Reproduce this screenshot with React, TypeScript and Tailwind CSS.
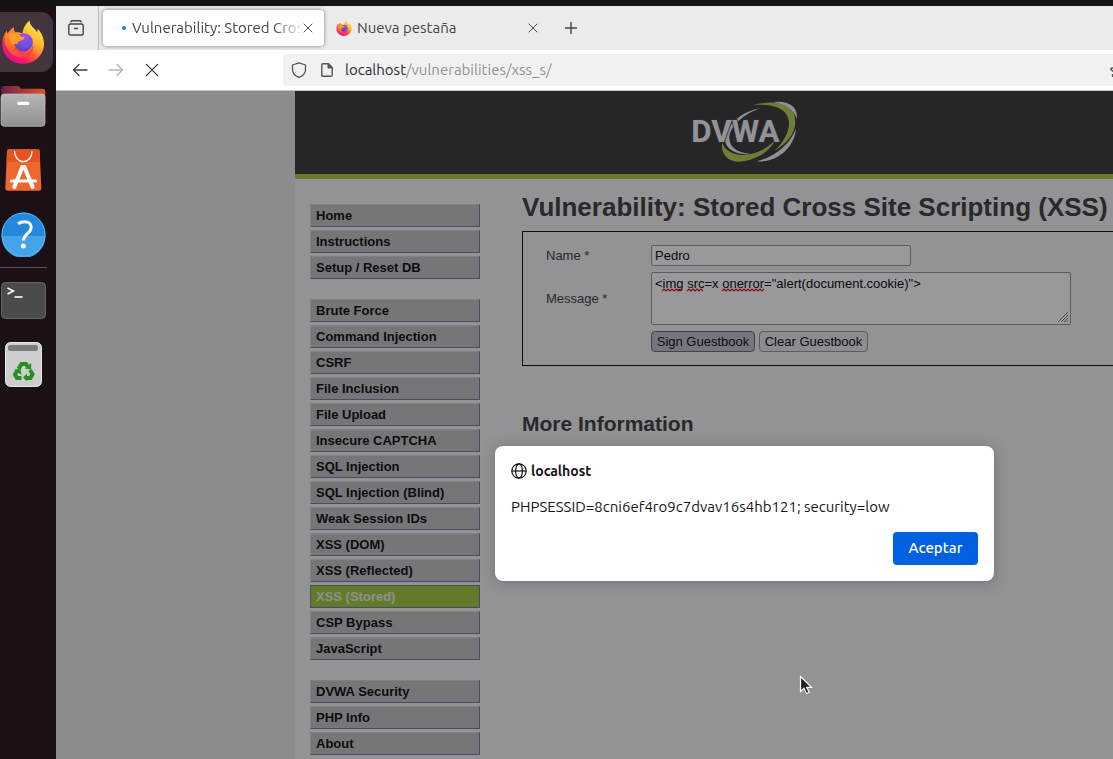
import React from "react";

const UI_FONT = "font-['Ubuntu','Noto_Sans',sans-serif]";

function FirefoxLogo({ id, className }: { id: string; className: string }) {
  return (
    <svg className={className} viewBox="0 0 132 134" aria-hidden="true">
      <defs>
        <linearGradient id={`${id}-body`} x1="0.85" y1="0.1" x2="0.25" y2="0.95">
          <stop offset="0" stopColor="#ffe94a" />
          <stop offset="0.35" stopColor="#ffb52c" />
          <stop offset="0.62" stopColor="#ff5a36" />
          <stop offset="0.85" stopColor="#f5156c" />
          <stop offset="1" stopColor="#e0128f" />
        </linearGradient>
        <linearGradient id={`${id}-left`} x1="0" y1="0" x2="0.4" y2="1">
          <stop offset="0" stopColor="#ff9a1f" />
          <stop offset="0.6" stopColor="#ff6a2e" />
          <stop offset="1" stopColor="#ff3d4a" />
        </linearGradient>
        <radialGradient id={`${id}-globe`} cx="0.6" cy="0.2" r="0.9">
          <stop offset="0" stopColor="#a24bf0" />
          <stop offset="0.6" stopColor="#6a4fe0" />
          <stop offset="1" stopColor="#4a3cb0" />
        </radialGradient>
      </defs>
      <path
        d="M86 2c0 9 5 15 12 22 6 6 9 9 11 14 1-4 2-8 1-12 13 13 20 31 20 46 0 34-28 61-64 61S3 106 3 72c0-14 4-28 14-40 0 4 0 7 2 10C24 34 30 28 38 23c-1 6 1 11 4 15 8-1 15 0 22 3C66 26 74 10 86 2Z"
        fill={`url(#${id}-body)`}
      />
      <path
        d="M17 32c0 4 0 7 2 10C24 34 30 28 38 23c-1 6 1 11 4 15 9 0 14 5 18 12l-20 40 28 14c17-1 29-15 27-33 8 19-6 44-33 45C34 113 14 90 11 66c-1-12 1-24 6-34Z"
        fill={`url(#${id}-left)`}
      />
      <circle cx="68" cy="68" r="28" fill={`url(#${id}-globe)`} />
      <path
        d="M24 44c10-7 28-6 36 6l10 2c2 5-3 9-11 11-7 2-11 6-10 12-6-4-11-2-15 0-8-8-12-20-10-31Z"
        fill="#ff9a2c"
      />
    </svg>
  );
}

function FilesIcon() {
  return (
    <svg className="h-[42px] w-[46px]" viewBox="0 0 138 126" aria-hidden="true">
      <defs>
        <linearGradient id="files-back" x1="0" x2="1">
          <stop offset="0" stopColor="#6d2247" />
          <stop offset="1" stopColor="#e0552a" />
        </linearGradient>
        <linearGradient id="files-front" x1="0" y1="0" x2="0" y2="1">
          <stop offset="0" stopColor="#b5b5b5" />
          <stop offset="1" stopColor="#909090" />
        </linearGradient>
      </defs>
      <path d="M4 40V14Q4 3 14 3H54q5 0 8 8H126q10 0 10 10V60H4Z" fill="url(#files-back)" />
      <rect x="3" y="27" width="132" height="97" rx="10" fill="url(#files-front)" stroke="#c2c2c2" strokeWidth="2" />
      <rect x="52" y="50" width="36" height="10" rx="4" fill="#fff" />
    </svg>
  );
}

function SoftwareIcon() {
  return (
    <svg className="h-[42px] w-[37px]" viewBox="0 0 111 126" aria-hidden="true">
      <path d="M12 1H99q5 0 5 6l5 110q0 8-8 8H9q-8 0-8-8L6 7Q6 1 12 1Z" fill="#ee672f" />
      <path d="M12 1H99q5 0 5 6l1 32H5L6 7Q6 1 12 1Z" fill="#e35420" />
      <path d="M29 8a26 30 0 0 0 52 0" fill="none" stroke="#fff" strokeWidth="4" strokeLinecap="round" />
      <path d="M52 54 28 114M58 54l25 60" fill="none" stroke="#fff" strokeWidth="12" strokeLinecap="round" />
      <path d="M19 96H92" stroke="#fff" strokeWidth="9" strokeLinecap="round" />
    </svg>
  );
}

function HelpIcon() {
  return (
    <svg className="size-[45px]" viewBox="0 0 45 45" aria-hidden="true">
      <circle cx="22.500" cy="22.500" r="22" fill="#2488dd" />
      <path d="M.5 24a22 22 0 0 0 44 0Z" fill="#45a4e8" />
      <circle cx="22.500" cy="22.500" r="21.500" fill="none" stroke="#5fb2ee" />
      <path d="M17 11.800c2-1.500 4.300-2.100 6.500-2.100 4.200 0 6.700 2.200 6.700 5.600 0 6.200-7.700 6.700-7.700 13.200" fill="none" stroke="#fff" strokeWidth="3" />
      <circle cx="22.300" cy="34" r="2.500" fill="#fff" />
    </svg>
  );
}

function TerminalIcon() {
  return (
    <svg className="h-[37px] w-[45px]" viewBox="0 0 45 37" aria-hidden="true">
      <rect x=".5" y=".5" width="44" height="36" rx="4" fill="#4b4b4b" stroke="#666" />
      <path d="m6.500 6 6 3-6 3" fill="none" stroke="#fff" strokeWidth="1.600" />
      <path d="M13.500 15h8" stroke="#fff" strokeWidth="1.600" />
    </svg>
  );
}

function TrashIcon() {
  return (
    <svg className="h-[45px] w-[37px]" viewBox="0 0 37 45" aria-hidden="true">
      <rect x=".5" y=".5" width="36" height="44" rx="5" fill="#cecece" stroke="#e8e8e8" />
      <rect x="3" y="3" width="30" height="6" rx="2.500" fill="#7b7b7b" />
      <g fill="none" stroke="#26901d" strokeWidth="4">
        <path d="m13.500 27 3-5h4.500l1.500 2.500" />
        <path d="m25 28 2.500 4-2 4h-4.500" />
        <path d="M16.500 36H12l-2-3.500 2-3.500" />
      </g>
      <path d="m20 26.500 6.200 1V21ZM22 31.500v8l-4-4ZM9 27.500l6.500-.5 1 6Z" fill="#26901d" />
    </svg>
  );
}

function Dock() {
  return (
    <nav aria-label="Dock" className="flex w-14 shrink-0 flex-col bg-[#1c1017] pt-[6px]">
      <button aria-label="Firefox" className="flex h-[60px] w-[53px] items-center rounded-r-xl bg-[#42353d] pl-px">
        <FirefoxLogo id="dock" className="h-[44px] w-[44px]" />
      </button>
      <div className="flex w-[47px] flex-col pt-[2px]">
        <button aria-label="Files" className="flex h-16 items-center"><FilesIcon /></button>
        <button aria-label="App Center" className="flex h-16 items-center pl-[5px]"><SoftwareIcon /></button>
        <button aria-label="Help" className="flex h-16 items-center pl-px"><HelpIcon /></button>
        <hr className="mt-px border-[#5b5157]" />
        <button aria-label="Terminal" className="flex h-16 items-center pl-px"><TerminalIcon /></button>
        <button aria-label="Trash" className="flex h-16 items-center pl-[5px]"><TrashIcon /></button>
      </div>
    </nav>
  );
}

function CloseIcon({ className }: { className: string }) {
  return (
    <svg className={className} viewBox="0 0 10 10" fill="none" stroke="currentColor" strokeWidth="0.950" aria-hidden="true">
      <path d="m1 1 8 8M9 1 1 9" strokeLinecap="round" />
    </svg>
  );
}

function TabStrip() {
  return (
    <div className="flex h-11 items-center bg-[#ebebeb] text-[#45454a]">
      <button aria-label="Recent tabs" className="flex h-full w-[43px] items-center border-r border-[#bdbdbd] pl-3">
        <svg className="size-4" viewBox="0 0 16 16" fill="none" stroke="currentColor" strokeWidth="1.400" strokeLinecap="round" aria-hidden="true">
          <path d="M2.800 1.800C3.300.9 4 .8 4.600.8h6.800c.7 0 1.300.1 1.800 1" />
          <rect x=".8" y="4" width="14.400" height="11" rx="1.800" />
          <path d="M6.500 8.500h3" />
        </svg>
      </button>
      <div className="ml-1 flex h-9 w-[221px] items-center rounded bg-white pr-[11px] pl-[19px] shadow-[0_0_4px_rgba(0,0,0,0.45)]">
        <span className="size-1 shrink-0 rounded-full bg-[#0a84ff]" />
        <span className="ml-[6px] min-w-0 flex-1 text-[15px] whitespace-nowrap [mask-image:linear-gradient(to_left,transparent,black_28px)]">
          Vulnerability: Stored Cros
        </span>
        <button aria-label="Close tab"><CloseIcon className="size-[10px]" /></button>
      </div>
      <div className="ml-3 flex w-[202px] items-center">
        <FirefoxLogo id="tab" className="size-4" />
        <span className="ml-[5px] flex-1 text-[15px]">Nueva pestaña</span>
        <button aria-label="Close tab"><CloseIcon className="size-[10px]" /></button>
      </div>
      <button aria-label="New tab" className="ml-[27px]">
        <svg className="size-3" viewBox="0 0 12 12" stroke="currentColor" strokeWidth="1.400" aria-hidden="true">
          <path d="M6 0v12M0 6h12" />
        </svg>
      </button>
    </div>
  );
}

function NavBar() {
  return (
    <div className="flex h-[41px] items-center border-b border-[#c6c6c8] bg-white text-[#3c3c40]">
      <button aria-label="Back" className="ml-4">
        <svg className="h-4 w-4" viewBox="0 0 16 16" fill="none" stroke="currentColor" strokeWidth="1.300" strokeLinecap="round" strokeLinejoin="round" aria-hidden="true">
          <path d="M15 8H1.500M7 2.500 1.500 8 7 13.500" />
        </svg>
      </button>
      <button aria-label="Forward" className="ml-5 text-[#b5b5b8]">
        <svg className="h-4 w-4" viewBox="0 0 16 16" fill="none" stroke="currentColor" strokeWidth="1.300" strokeLinecap="round" strokeLinejoin="round" aria-hidden="true">
          <path d="M1 8h13.500M9 2.500 14.500 8 9 13.500" />
        </svg>
      </button>
      <button aria-label="Stop" className="ml-[21px]"><CloseIcon className="size-[14px]" /></button>
      <div className="ml-[124px] flex h-8 min-w-0 flex-1 items-center overflow-hidden rounded-l bg-[#f1f1f1] pl-2 text-[#55555a]">
        <svg className="h-4 w-4 shrink-0" viewBox="0 0 16 16" fill="none" stroke="currentColor" strokeWidth="1.300" strokeLinejoin="round" aria-hidden="true">
          <path d="M8 .8 14.500 3v4.500c0 3.500-2.500 6.300-6.500 7.800-4-1.500-6.500-4.300-6.500-7.800V3Z" />
        </svg>
        <svg className="ml-[14px] h-[14px] w-3 shrink-0" viewBox="0 0 12 14" fill="none" stroke="currentColor" strokeWidth="1.400" strokeLinejoin="round" aria-hidden="true">
          <path d="M2 .8h5.500l3.700 3.700V12q0 1.200-1.200 1.200H2Q.8 13.200.8 12V2Q.8.8 2 .8Z" />
          <path d="M7.200.8v3.900h4Z" fill="currentColor" />
        </svg>
        <a href="#" className="ml-3 flex-1 text-[15px] whitespace-nowrap text-[#929296]">
          <span className="text-[#2b2b30]">localhost</span>/vulnerabilities/xss_s/
        </a>
        <svg className="h-4 w-[3px] shrink-0" viewBox="0 0 3 16" fill="none" stroke="currentColor" strokeWidth="1.400" aria-hidden="true">
          <path d="M3 6H1.500L.8 7.200 3 9.500M2.500 12v3" />
        </svg>
      </div>
    </div>
  );
}

function DvwaLogo() {
  return (
    <svg className="h-[63px] w-[108px]" viewBox="60 28 324 189" role="img" aria-label="DVWA">
      <path d="M272 52C215 62 167 103 165 146c0 32 38 50 86 44-40-1-71-15-73-46-2-33 38-72 94-92Z" fill="#f0f0f0" />
      <path d="M248 43c76-20 128 3 128 50 0 32-20 62-62 87 28-27 44-58 43-85-2-39-44-58-109-52Z" fill="#b0d046" />
      <path d="M157 156c8 31 56 48 106 28 20-8 35-18 52-36-17 39-69 67-115 65-32-3-49-29-43-57Z" fill="#b0d046" />
      <path d="M312 34c44-5 73 14 68 51-7-25-31-43-68-51ZM378 115c-4 50-52 102-118 97 58-14 98-51 118-97Z" fill="#f0f0f0" />
      <text
        x="64"
        y="155"
        fill="#f4f4f4"
        stroke="#3a3a3e"
        strokeWidth="5"
        paintOrder="stroke"
        fontSize="94"
        fontWeight="700"
        fontFamily="Roboto, sans-serif"
      >
        DVWA
      </text>
    </svg>
  );
}

const MENU = [
  ["Home", "Instructions", "Setup / Reset DB"],
  [
    "Brute Force",
    "Command Injection",
    "CSRF",
    "File Inclusion",
    "File Upload",
    "Insecure CAPTCHA",
    "SQL Injection",
    "SQL Injection (Blind)",
    "Weak Session IDs",
    "XSS (DOM)",
    "XSS (Reflected)",
    "XSS (Stored)",
    "CSP Bypass",
    "JavaScript",
  ],
  ["DVWA Security", "PHP Info", "About"],
];

function Menu() {
  return (
    <nav aria-label="Main menu" className="flex w-[170px] shrink-0 flex-col gap-5 pt-[25px] pb-1">
      {MENU.map((group) => (
        <ul key={group[0]} className="flex flex-col gap-[3px]">
          {group.map((item) => (
            <li key={item}>
              <a
                href="#"
                className={
                  item === "XSS (Stored)"
                    ? "block h-[23px] border border-[#707798] bg-[#9bcb33] pl-[5px] text-[13px] leading-[21px] font-bold text-[#f0f0e0]"
                    : "block h-[23px] border border-t-[#d4d4d4] border-r-[#707798] border-b-[#707798] border-l-[#d4d4d4] bg-[#c0c0c0] pl-[5px] text-[13px] leading-[21px] font-bold text-black"
                }
              >
                {item}
              </a>
            </li>
          ))}
        </ul>
      ))}
    </nav>
  );
}

function GuestbookForm() {
  return (
    <form
      onSubmit={(e) => e.preventDefault()}
      className="mt-2 flex h-[135px] flex-col gap-[6px] border border-r-0 border-black pt-[13px] pl-[23px] text-[13px] text-[#333]"
    >
      <div className="flex items-center">
        <label htmlFor="name" className="w-[105px]">Name *</label>
        <input id="name" defaultValue="Pedro" className="h-[21px] w-[260px] rounded-xs border border-[#8f8f9d] bg-white px-[3px] text-black outline-none" />
      </div>
      <div className="flex items-center">
        <label htmlFor="message" className="w-[105px]">Message *</label>
        <div className="relative flex">
          <textarea
            id="message"
            spellCheck={false}
            defaultValue={'<img src=x onerror="alert(document.cookie)">'}
            className="h-[53px] w-[420px] resize-none rounded-xs border border-[#8f8f9d] bg-white px-[3px] pt-[3px] leading-4 text-black outline-none"
          />
          <svg className="pointer-events-none absolute top-4 left-[11px] h-[4px] w-[104px]" viewBox="0 0 104 4" fill="none" stroke="#e00000" strokeWidth="1.200" aria-hidden="true">
            <path d="M0 3l2-2 2 2 2-2 2 2 2-2 2 2 2-2 2 2 2-2 2 2M25 3l2-2 2 2 2-2 2 2 2-2 2 2 2-2 2 2M60 3l2-2 2 2 2-2 2 2 2-2 2 2 2-2 2 2 2-2 2 2 2-2 2 2 2-2 2 2 2-2 2 2 2-2 2 2 2-2 2 2 2-2" />
          </svg>
          <svg className="pointer-events-none absolute right-[3px] bottom-[3px] size-[10px]" viewBox="0 0 10 10" stroke="#777" strokeWidth="1" aria-hidden="true">
            <path d="M0 10 10 0M3 10l7-7M6 10l4-4M8.500 10 10 8.500" />
          </svg>
        </div>
      </div>
      <div className="flex gap-1 pl-[105px] text-black">
        <button className="h-[21px] w-[104px] rounded border border-[#63636f] bg-[#c2c2cb] whitespace-nowrap">Sign Guestbook</button>
        <button className="h-[21px] w-[109px] rounded border border-[#8f8f9d] bg-[#e9e9ed] whitespace-nowrap">Clear Guestbook</button>
      </div>
    </form>
  );
}

function AlertDialog() {
  return (
    <div
      role="alertdialog"
      aria-labelledby="alert-title"
      aria-describedby="alert-text"
      className={`absolute top-[355px] left-[439px] flex w-[499px] flex-col rounded-lg bg-white p-4 text-[#15141a] shadow-[0_2px_14px_rgba(58,57,68,0.35)] ${UI_FONT}`}
    >
      <div className="flex h-[18px] items-center gap-1">
        <svg className="size-4" viewBox="0 0 16 16" fill="none" stroke="currentColor" strokeWidth="1.200" aria-hidden="true">
          <circle cx="8" cy="8" r="7.200" />
          <ellipse cx="8" cy="8" rx="3.400" ry="7.200" />
          <path d="M.8 8h14.400" />
        </svg>
        <h2 id="alert-title" className="text-sm font-semibold">localhost</h2>
      </div>
      <p id="alert-text" className="mt-4 text-[15px] leading-[22px]">PHPSESSID=8cni6ef4ro9c7dvav16s4hb121; security=low</p>
      <button className="mt-[14px] h-[33px] w-[85px] self-end rounded bg-[#0060df] text-[15px] font-medium text-white">Aceptar</button>
    </div>
  );
}

function WebPage() {
  return (
    <div className="relative flex flex-1 bg-[#e7e7e7] pl-[239px] font-['Liberation_Sans',Arial,sans-serif]">
      <div className="flex min-w-0 flex-1 flex-col bg-[#f4f4f4]">
        <header className="h-[88px] border-b-[5px] border-[#a1cc33] bg-[#2f2f2f] pt-[9px] pl-[395px]">
          <DvwaLogo />
        </header>
        <div className="flex pl-[15px]">
          <Menu />
          <main className="ml-[42px] min-w-0 flex-1 pt-3 text-[#333]">
            <h1 className="text-[26px] leading-8 font-bold whitespace-nowrap">Vulnerability: Stored Cross Site Scripting (XSS)</h1>
            <GuestbookForm />
            <h2 className="mt-[46px] text-[21px] leading-6 font-bold">More Information</h2>
          </main>
        </div>
      </div>
      <div className="absolute inset-0 bg-[rgba(28,27,34,0.45)]" />
      <AlertDialog />
      <svg className="absolute top-[584px] left-[743px] h-5 w-[14px]" viewBox="0 0 14 20" aria-hidden="true">
        <path d="M1.500 1.500v15l3.500-3.300 2.500 5.300 2.700-1.200-2.400-5h4.700Z" fill="#222" stroke="#fff" strokeWidth="1.200" />
      </svg>
    </div>
  );
}

export default function App() {
  return (
    <div className="flex min-h-screen flex-col overflow-hidden">
      <div className="h-[6px] bg-[#131313]" />
      <div className="flex flex-1">
        <Dock />
        <div className={`flex min-w-0 flex-1 flex-col ${UI_FONT}`}>
          <TabStrip />
          <NavBar />
          <WebPage />
        </div>
      </div>
    </div>
  );
}
